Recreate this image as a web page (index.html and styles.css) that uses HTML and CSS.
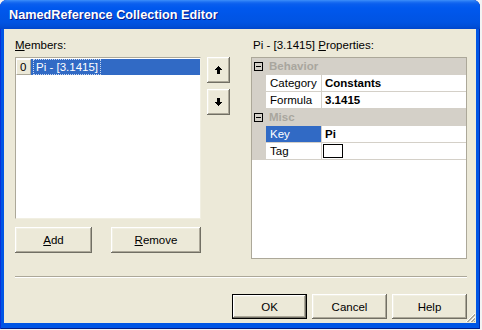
FILE: index.html
```html
<!DOCTYPE html>
<html>
<head>
<meta charset="utf-8">
<title>NamedReference Collection Editor</title>
<link rel="stylesheet" href="styles.css">
</head>
<body>
<div class="window">
  <div class="titlebar"><span class="title">NamedReference Collection Editor</span></div>
  <div class="client">
    <div class="main">
      <div class="left">
        <div class="label"><u>M</u>embers:</div>
        <div class="listrow">
          <div class="listbox">
            <div class="item">
              <span class="idx">0</span>
              <span class="itext"><span class="focus">Pi - [3.1415]</span></span>
            </div>
          </div>
          <div class="arrows">
            <button class="btn arrow" type="button">
              <svg width="7" height="8" viewBox="0 0 7 8" shape-rendering="crispEdges"><rect x="3" y="0" width="1" height="1"/><rect x="2" y="1" width="3" height="1"/><rect x="1" y="2" width="5" height="1"/><rect x="0" y="3" width="7" height="1"/><rect x="2" y="4" width="3" height="4"/></svg>
            </button>
            <button class="btn arrow" type="button">
              <svg width="7" height="8" viewBox="0 0 7 8" shape-rendering="crispEdges"><rect x="2" y="0" width="3" height="4"/><rect x="0" y="4" width="7" height="1"/><rect x="1" y="5" width="5" height="1"/><rect x="2" y="6" width="3" height="1"/><rect x="3" y="7" width="1" height="1"/></svg>
            </button>
          </div>
        </div>
        <div class="btnrow">
          <button class="btn add" type="button"><u>A</u>dd</button>
          <button class="btn remove" type="button"><u>R</u>emove</button>
        </div>
      </div>
      <div class="right">
        <div class="label plabel">Pi - [3.1415] <u>P</u>roperties:</div>
        <div class="grid">
          <div class="cat"><span class="gutter"><span class="minus"></span></span><span class="catname">Behavior</span></div>
          <div class="prop"><span class="gutter"></span><span class="pname">Category</span><span class="pval">Constants</span></div>
          <div class="prop"><span class="gutter"></span><span class="pname">Formula</span><span class="pval">3.1415</span></div>
          <div class="cat"><span class="gutter"><span class="minus"></span></span><span class="catname">Misc</span></div>
          <div class="prop"><span class="gutter"></span><span class="pname sel">Key</span><span class="pval">Pi</span></div>
          <div class="prop"><span class="gutter"></span><span class="pname">Tag</span><span class="pval"><span class="tagbox"></span></span></div>
        </div>
      </div>
    </div>
    <div class="sep"></div>
    <div class="footer">
      <button class="btn dlg default" type="button">OK</button>
      <button class="btn dlg" type="button">Cancel</button>
      <button class="btn dlg" type="button">Help</button>
    </div>
    <div class="grip">
      <svg width="11" height="11" viewBox="0 0 11 11" shape-rendering="crispEdges">
        <path d="M10 1 L1 10" stroke="#fff" stroke-width="1"/>
        <path d="M10 2 L2 10" stroke="#ACA899" stroke-width="1"/>
        <path d="M10 3 L3 10" stroke="#ACA899" stroke-width="1"/>
        <path d="M10 5 L5 10" stroke="#fff" stroke-width="1"/>
        <path d="M10 6 L6 10" stroke="#ACA899" stroke-width="1"/>
        <path d="M10 7 L7 10" stroke="#ACA899" stroke-width="1"/>
        <path d="M10 9 L9 10" stroke="#ACA899" stroke-width="1"/>
      </svg>
    </div>
  </div>
</div>
</body>
</html>
```

FILE: styles.css
```css
html, body {
  margin: 0;
  padding: 0;
}
body {
  width: 482px;
  height: 330px;
  overflow: hidden;
  background: #f3f3f3;
  font-family: "Liberation Sans", Arial, sans-serif;
  font-size: 11.5px;
  color: #000;
}
.window {
  width: 480px;
  height: 329px;
  display: flex;
  flex-direction: column;
  border-radius: 7px 7px 0 0;
  overflow: hidden;
  background: #0055e5;
  box-shadow: inset 1px 0 0 #0831d9, inset -1px 0 0 #0029a8, inset 0 -1px 0 #001e8a;
}
.titlebar {
  height: 29px;
  flex: none;
  display: flex;
  align-items: center;
  padding-left: 9px;
  background: linear-gradient(to bottom, #3d8ffa 0px, #1b6ff2 2px, #0a5eee 4px, #0058ee 8px, #0055e7 16px, #0054e3 22px, #004fd8 26px, #0046cc 29px);
}
.title {
  color: #fff;
  font-family: "Liberation Sans", Arial, sans-serif;
  font-weight: bold;
  font-size: 12.7px;
  text-shadow: 1px 1px 0 #0a1883;
  margin-top: 1px;
}
.client {
  flex: 1;
  margin: 0 4px 6px 4px;
  background: #ece9d8;
  position: relative;
  padding: 10px 9px 0 11px;
}
.main {
  display: flex;
}
.label {
  height: 18px;
  line-height: 13px;
}
.plabel {
  padding-left: 2px;
}
.listrow {
  display: flex;
  gap: 6px;
}
.listbox {
  width: 186px;
  height: 162px;
  box-sizing: border-box;
  background: #fff;
  border: 1px solid;
  border-color: #aca899 #f1efe2 #f1efe2 #aca899;
  padding-top: 1px;
}
.item {
  display: flex;
  height: 16px;
}
.idx {
  width: 15px;
  height: 16px;
  box-sizing: border-box;
  background: #ece9d8;
  border: 1px solid;
  border-color: #fff #aca899 #aca899 #fff;
  line-height: 14px;
  padding-left: 3px;
}
.itext {
  flex: 1;
  background: #316ac5;
  color: #fff;
  padding-left: 2px;
  display: flex;
}
.focus {
  height: 16px;
  box-sizing: border-box;
  border: 1px dotted #c8d6ee;
  padding: 0 2px 0 2px;
  line-height: 14px;
}
.arrows {
  display: flex;
  flex-direction: column;
  gap: 6px;
}
.btn {
  font-family: "Liberation Sans", Arial, sans-serif;
  font-size: 11.5px;
  color: #000;
  background: #ece9d8;
  border: none;
  padding: 0;
  margin: 0;
  box-sizing: border-box;
  box-shadow: inset -1px -1px 0 #716f64, inset 1px 1px 0 #fff, inset -2px -2px 0 #aca899, inset 2px 2px 0 #f1efe2;
  display: flex;
  align-items: center;
  justify-content: center;
}
.arrow {
  width: 23px;
  height: 26px;
}
.arrow svg {
  fill: #000;
  display: block;
}
.btnrow {
  margin-top: 8px;
  display: flex;
  gap: 19px;
}
.add {
  width: 77px;
  height: 26px;
}
.remove {
  width: 90px;
  height: 26px;
}
.right {
  margin-left: 21px;
}
.grid {
  width: 216px;
  height: 202px;
  box-sizing: border-box;
  border: 1px solid #aca899;
  background: #fff;
}
.cat, .prop {
  display: flex;
  height: 17px;
  box-sizing: border-box;
}
.cat {
  background: #d4d0c8;
}
.gutter {
  width: 14px;
  flex: none;
  background: #d4d0c8;
  position: relative;
}
.minus {
  position: absolute;
  left: 2px;
  top: 4px;
  width: 9px;
  height: 9px;
  box-sizing: border-box;
  border: 1px solid #000;
}
.minus::after {
  content: "";
  position: absolute;
  left: 1px;
  top: 3px;
  width: 5px;
  height: 1px;
  background: #000;
}
.catname {
  padding-left: 3px;
  font-weight: bold;
  color: #a9a69e;
  line-height: 16px;
}
.pname {
  width: 56px;
  flex: none;
  box-sizing: border-box;
  padding-left: 4px;
  line-height: 16px;
  border-right: 1px solid #d4d0c8;
  border-bottom: 1px solid #d4d0c8;
}
.pname.sel {
  background: #316ac5;
  color: #fff;
}
.pval {
  flex: 1;
  padding-left: 3px;
  line-height: 16px;
  font-weight: bold;
  border-bottom: 1px solid #d4d0c8;
  display: flex;
  align-items: flex-start;
}
.tagbox {
  width: 20px;
  height: 14px;
  box-sizing: border-box;
  border: 1px solid #000;
  background: #fff;
  margin-top: 1px;
  margin-left: -2px;
}
.sep {
  margin-top: 17px;
  height: 2px;
  box-sizing: border-box;
  border-top: 1px solid #aca899;
  border-bottom: 1px solid #fff;
}
.footer {
  margin-top: 16px;
  display: flex;
  justify-content: flex-end;
  gap: 5px;
}
.dlg {
  width: 75px;
  height: 25px;
}
.default {
  box-shadow: inset 0 0 0 1px #000, inset -2px -2px 0 #716f64, inset 2px 2px 0 #fff, inset -3px -3px 0 #aca899, inset 3px 3px 0 #f1efe2;
}
.grip {
  position: absolute;
  right: 0;
  bottom: 0;
  width: 11px;
  height: 11px;
}
.grip svg {
  display: block;
}
```
